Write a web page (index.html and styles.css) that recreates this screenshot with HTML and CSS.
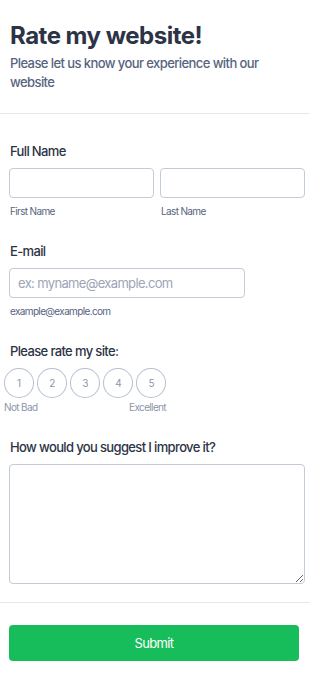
FILE: index.html
```html
<!DOCTYPE html>
<html lang="en">
<head>
  <meta charset="UTF-8">
  <meta name="viewport" content="width=device-width, initial-scale=1.0">
  <title>Rate my website</title>
  <link rel="stylesheet" href="styles.css">
</head>
<body>

  <!-- Header -->
  <div class="form-header">
    <h1>Rate my website!</h1>
    <p>Please let us know your experience with our website</p>
  </div>

  <form class="form-body">
    <!-- Full Name -->
    <div class="field">
      <label class="field-label">Full Name</label>
      <div class="name-row">
        <div class="name-col">
          <input type="text" class="text-input">
          <span class="sublabel">First Name</span>
        </div>
        <div class="name-col">
          <input type="text" class="text-input">
          <span class="sublabel">Last Name</span>
        </div>
      </div>
    </div>

    <!-- Email -->
    <div class="field">
      <label class="field-label">E-mail</label>
      <input type="email" class="text-input email-input" placeholder="ex: myname@example.com">
      <span class="sublabel">example@example.com</span>
    </div>

    <!-- Rating -->
    <div class="field">
      <label class="field-label">Please rate my site:</label>
      <div class="rating">
        <div class="rating-circles">
          <span class="circle">1</span>
          <span class="circle">2</span>
          <span class="circle">3</span>
          <span class="circle">4</span>
          <span class="circle">5</span>
        </div>
        <div class="rating-labels">
          <span>Not Bad</span>
          <span>Excellent</span>
        </div>
      </div>
    </div>

    <!-- Suggestion -->
    <div class="field">
      <label class="field-label">How would you suggest I improve it?</label>
      <textarea class="text-area"></textarea>
    </div>
  </form>

  <div class="form-footer">
    <button type="button" class="submit-btn">Submit</button>
  </div>

</body>
</html>
```

FILE: styles.css
```css
/* Basic Reset */
* {
  margin: 0;
  padding: 0;
  box-sizing: border-box;
}

body {
  font-family: Inter, "Noto Sans", sans-serif;
  background-color: #fff;
  color: #2c3345;
  letter-spacing: -0.04em;
}

/* Header */
.form-header {
  padding: 21px 10px 21px;
  border-bottom: 1px solid #e6e7ee;
}

.form-header h1 {
  font-size: 24px;
  line-height: 30px;
  font-weight: 700;
  letter-spacing: -0.5px;
  color: #2c3345;
}

.form-header p {
  max-width: 270px;
  margin-top: 3px;
  font-size: 13px;
  line-height: 19px;
  font-weight: 500;
  letter-spacing: -0.045em;
  color: #57647e;
}

/* Fields */
.form-body {
  padding: 28px 0 0;
}

.field {
  padding: 0 5px 0 9px;
  margin-bottom: 24px;
}

.field-label {
  display: block;
  font-size: 13px;
  line-height: 18px;
  font-weight: 500;
  margin-left: 1px;
  margin-bottom: 8px;
}

.name-row {
  display: flex;
  gap: 6px;
}

.name-col {
  flex: 1;
}

.text-input {
  display: block;
  width: 100%;
  height: 30px;
  border: 1px solid #c3cad8;
  border-radius: 4px;
  padding: 0 8px;
  font-family: inherit;
  letter-spacing: -0.05em;
  font-size: 13px;
  color: #2c3345;
}

.text-input::placeholder {
  color: #9ea3b8;
}

.email-input {
  width: 236px;
}

.sublabel {
  display: block;
  margin-top: 6px;
  margin-left: 1px;
  font-size: 10px;
  line-height: 14px;
  color: #57647e;
}

/* Rating */
.rating {
  margin-left: -5px;
  width: 162px;
}

.rating-circles {
  display: flex;
  gap: 3.5px;
}

.circle {
  width: 30px;
  height: 30px;
  border: 1px solid #b8bfd0;
  border-radius: 50%;
  display: flex;
  align-items: center;
  justify-content: center;
  font-size: 10px;
  color: #8d95aa;
}

.rating-labels {
  display: flex;
  justify-content: space-between;
  margin-top: 2px;
  font-size: 10px;
  line-height: 14px;
  color: #8d95aa;
}

.text-area {
  display: block;
  width: 100%;
  height: 120px;
  border: 1px solid #c3cad8;
  border-radius: 4px;
  resize: vertical;
  font-family: inherit;
}

.form-body .field:last-child {
  margin-bottom: 18px;
}

/* Footer */
.form-footer {
  border-top: 1px solid #e6e7ee;
  padding: 22px 11px 30px 9px;
}

.submit-btn {
  width: 100%;
  height: 36px;
  background-color: #18bd5b;
  color: #fff;
  border: none;
  border-radius: 4px;
  font-family: inherit;
  letter-spacing: inherit;
  font-size: 13px;
  font-weight: 400;
  cursor: pointer;
}
```
